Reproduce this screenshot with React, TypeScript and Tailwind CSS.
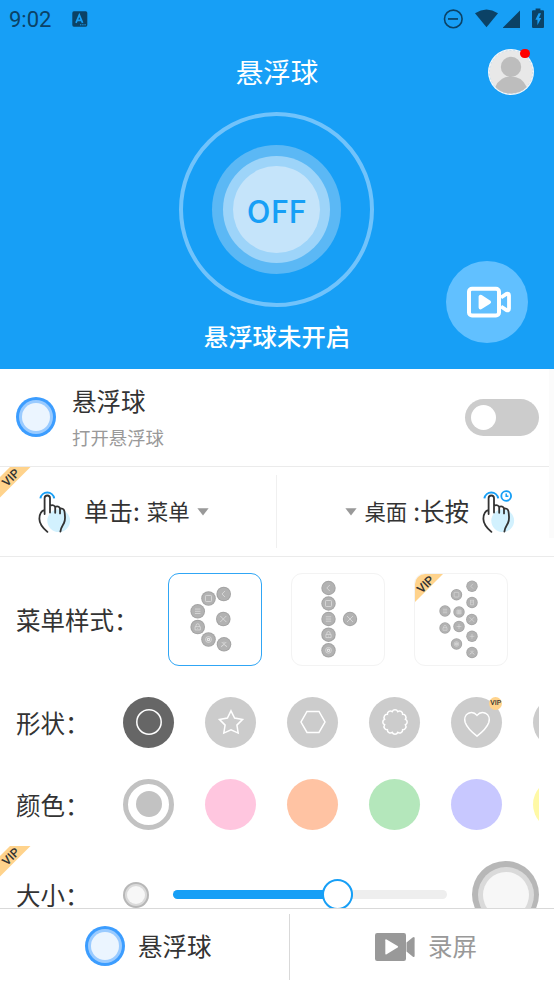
import type { ReactNode } from "react";

type Glyph = "back" | "square" | "menu" | "lock" | "target" | "fan" | "close" | "plus" | "trash" | "grid";
type Dot = [number, number, Glyph];

const arcDots: Dot[] = [
  [55.7, 21, "back"],
  [40.5, 25.5, "square"],
  [29.7, 38.3, "menu"],
  [29.7, 54, "lock"],
  [40.5, 66.5, "target"],
  [56, 71.3, "fan"],
  [55.3, 46, "close"],
];

const lineDots: Dot[] = [
  [37.5, 15, "back"],
  [37.5, 30.5, "square"],
  [37.5, 46, "menu"],
  [37.5, 61.7, "lock"],
  [37.5, 77.3, "target"],
  [59, 46, "close"],
];

const doubleDots: Dot[] = [
  [58, 13.2, "back"],
  [42.5, 21.7, "square"],
  [58, 29.5, "trash"],
  [31, 38, "menu"],
  [45, 39, "grid"],
  [57.8, 46.5, "close"],
  [31, 55, "lock"],
  [45, 53.5, "plus"],
  [58, 63.3, "plus"],
  [42.5, 71, "target"],
  [58, 79.5, "fan"],
];

const glyphs: Record<Glyph, ReactNode> = {
  back: <path d="M1.3-3 L-1.7 0 L1.3 3" />,
  square: <rect x="-3" y="-3" width="6" height="6" rx="0.8" />,
  menu: <path d="M-2.7-2.2H2.7M-2.7 0H2.7M-2.7 2.2H2.7" />,
  lock: <path d="M-2.6-0.3H2.6V2.9H-2.6ZM-1.6-0.3V-1.6A1.6 1.6 0 0 1 1.6-1.6V-0.3M0 1V1.8" />,
  target: (
    <>
      <circle r="2.9" />
      <circle r="1.2" strokeWidth="1.2" />
    </>
  ),
  fan: <path d="M-2.3-2.3L2.2 2.2M2.3-2.3L-2.2 2.2M-3 2.4L-1.3 1M3 2.4L1.3 1M0-1V-2.6" />,
  close: <path d="M-3-3L3 3M3-3L-3 3" />,
  plus: <path d="M-3 0H3M0-3V3" />,
  trash: <path d="M-2.4-2.8H2.4M-1.8-2.8V2.9H1.8V-2.8M-1.8-0.6H1.8" />,
  grid: <path d="M-2.6-2.4H2.6V2.4H-2.6ZM-0.8-2.4V2.4M1-2.4V2.4M-2.6 0H2.6" />,
};

const colors = ["bg-[#ffc6df]", "bg-[#ffc3a3]", "bg-[#b4e7bb]", "bg-[#c8c8ff]", "bg-[#fff9a6]"];

// scalloped outline for the flower shape
function flowerPath() {
  const n = 12;
  let d = "";
  for (let i = 0; i <= n; i++) {
    const a = (i / n) * Math.PI * 2 - Math.PI / 2 + Math.PI / n;
    const x = (13 + Math.cos(a) * 10.8).toFixed(2);
    const y = (13 + Math.sin(a) * 10.8).toFixed(2);
    d += i === 0 ? `M${x} ${y}` : `A3.1 3.1 0 0 1 ${x} ${y}`;
  }
  return d + "Z";
}

const shapes: ReactNode[] = [
  <circle key="circle" cx="13" cy="13" r="12.2" />,
  <path key="star" d="M13 1.8L16.6 9.1L24.6 10.4L18.9 16.1L20.2 24.1L13 20.8L5.8 24.1L7.1 16.1L1.4 10.4L9.4 9.1Z" />,
  <path key="hexagon" d="M7 2.4H19L25 13L19 23.4H7L1 13Z" />,
  <path key="flower" d={flowerPath()} />,
  <path
    key="heart"
    d="M13 6.4C10.4 3.2 7.2 3 4.6 4.2C1 6 0 10 1.2 13.6C2.8 18 8 23.4 13 27.2C18 23.4 23.2 18 24.8 13.6C26 10 25 6 21.4 4.2C18.8 3 15.6 3.2 13 6.4Z"
  />,
  null,
];

function MenuDots({ dots, r }: { dots: Dot[]; r: number }) {
  return (
    <svg width="94" height="93" viewBox="0 0 94 93" className="block">
      {dots.map(([x, y, g], i) => (
        <g key={i} transform={`translate(${x} ${y}) scale(${r / 7.2})`}>
          <circle r="7.2" fill="#a4a4a4" />
          <circle r="6.2" fill="#b2b2b2" />
          <g fill="none" stroke="#e6e6e6" strokeWidth="0.65">
            {glyphs[g]}
          </g>
        </g>
      ))}
    </svg>
  );
}

function VipText({ x, y }: { x: number; y: number }) {
  return (
    <text
      transform={`translate(${x} ${y}) rotate(-45)`}
      textAnchor="middle"
      y="4.2"
      fontSize="12"
      fontWeight="500"
      fontFamily="Roboto, sans-serif"
      fill="#333"
    >
      VIP
    </text>
  );
}

function VipRibbon() {
  return (
    <svg width="31" height="31" viewBox="0 0 31 31" className="absolute left-0 top-0">
      <path d="M10 0H30.5L0 30.5V10Z" fill="#ffd38c" />
      <VipText x={10.8} y={10.6} />
    </svg>
  );
}

function BallIcon() {
  return (
    <span className="-mt-px flex size-10 shrink-0 items-center justify-center rounded-full bg-[#3c9dff]">
      <span className="flex size-[34px] items-center justify-center rounded-full bg-[#9acbff]">
        <span className="size-7 rounded-full bg-[#ebf5ff]" />
      </span>
    </span>
  );
}

function HandIcon({ long = false }: { long?: boolean }) {
  return (
    <svg width="34" height="44" viewBox="0 0 34 44" fill="none" strokeLinecap="round" className="shrink-0">
      <circle cx="20.7" cy="30.7" r="11.4" fill="#d2f1fe" />
      <path d="M2.4 8.4A7 7 0 0 1 16.2 8.4" stroke="#179ff6" strokeWidth="2" strokeLinecap="butt" />
      {long && (
        <g stroke="#179ff6" strokeWidth="1.5">
          <circle cx="24.2" cy="6" r="4.9" strokeWidth="1.8" />
          <path d="M24.2 3.4V6.2H26.4" strokeLinecap="butt" />
        </g>
      )}
      <path
        d="M6.6 24V8.2A2.7 2.7 0 0 1 12 8.2V22.6M12 15.6C15 14.6 17.2 15.5 17.2 17.8V22.8M17.2 16.8C20 15.8 22 17 22 19.4V23.4M22 18.4C25.6 18 26.6 20 26.8 24C27 28 27.6 29.6 26 33C24.6 36 22.8 37.2 22.4 41.6M6.6 19.8C3 21 1.4 24.8 1.4 28.6C1.2 33.6 4.4 37.6 9.4 41.9"
        stroke="#333"
        strokeWidth="1.8"
      />
    </svg>
  );
}

function Caret() {
  return (
    <svg width="12" height="8" viewBox="0 0 12 8" className="shrink-0">
      <path d="M0.4 0.3H11.6L6 7.6Z" fill="#999" />
    </svg>
  );
}

function StatusBar() {
  return (
    <div className="flex h-[38px] items-center pl-[9px] pr-[9px] text-[#0b4266]">
      <span className="w-[43px] pt-[2px] font-[Roboto,sans-serif] text-[22px] leading-none">9:02</span>
      <svg width="16" height="16" viewBox="0 0 16 16" className="ml-5">
        <rect x="0.3" y="0.3" width="15" height="15.4" rx="1.6" fill="currentColor" />
        <path d="M4 11.8L7.3 3.9L10.6 11.8M5.3 9.3H9.4" fill="none" stroke="#179ff6" strokeWidth="1.7" />
        <path d="M8 13.8H14" stroke="#179ff6" strokeWidth="1" strokeDasharray="1.4 0.8" />
      </svg>
      <svg width="102" height="22" viewBox="0 0 102 22" fill="currentColor" className="ml-auto">
        <circle cx="10.3" cy="10.9" r="8.8" fill="none" stroke="currentColor" strokeWidth="1.6" />
        <path d="M5 10.1H15V11.8H5Z" />
        <path d="M32 5.2Q43.5-2 55 5.2L43.5 19.3Z" />
        <path d="M60 20V19.6L77 2.4V20Z" />
        <path
          fillRule="evenodd"
          d="M92.6 0.4H97.4V2.2H100Q101 2.2 101 3.2V18.8Q101 20 100 20H90.2Q89 20 89 18.8V3.2Q89 2.2 90.2 2.2H92.6ZM95.6 5.2L92.4 11.8H94.4V17.2L98.2 10H96L98 5.2Z"
        />
      </svg>
    </div>
  );
}

function Header() {
  return (
    <header className="relative h-[369px] shrink-0 bg-[#179ff6] text-white">
      <StatusBar />
      <div className="grid h-[68px] grid-cols-[1fr_auto_1fr] items-center">
        <h1 className="col-start-2 text-[27.5px] leading-none">悬浮球</h1>
        <div className="relative mr-5 size-[46px] justify-self-end">
          <svg width="46" height="46" viewBox="0 0 46 46">
            <circle cx="23" cy="23" r="23" fill="#f5f8fa" />
            <circle cx="23" cy="23" r="21.7" fill="#e8e8e8" stroke="#9fcdec" strokeWidth="0.5" strokeDasharray="2 2" />
            <circle cx="23" cy="17.9" r="10.2" fill="#bdbdbd" />
            <path d="M7.3 38Q12 27.6 23 27.6T38.7 38Q32.5 44.5 23 44.5T7.3 38Z" fill="#bdbdbd" />
          </svg>
          <span className="absolute right-[4.5px] top-0 size-[9.4px] rounded-full bg-[#f00]" />
        </div>
      </div>
      <div className="mt-[6px] flex flex-col items-center">
        <div className="mr-px flex size-[195px] items-center justify-center rounded-full border-4 border-[#71c3fb]">
          <div className="flex size-[129px] items-center justify-center rounded-full bg-[#5bb8f5]">
            <div className="flex size-[107px] items-center justify-center rounded-full bg-[#9dd4f9]">
              <div className="flex size-[87px] items-center justify-center rounded-full bg-[#c5e4fa] text-[31.5px] font-medium leading-none text-[#179ff6]">
                OFF
              </div>
            </div>
          </div>
        </div>
        <p className="mt-4 text-[24.4px] font-medium leading-[25px]">悬浮球未开启</p>
      </div>
      <button className="absolute bottom-[26px] right-[26px] flex size-[82px] items-center justify-center rounded-full bg-[#61c0ff]">
        <svg width="46" height="32" viewBox="0 0 46 32" fill="none" stroke="#fff" strokeWidth="4" strokeLinejoin="round" className="ml-1">
          <rect x="3" y="2.8" width="30" height="26.6" rx="3" />
          <path d="M35 11.5L40.5 7.8Q43 7 43 9.5V22.5Q43 25 40.5 24.2L35 20.5" strokeWidth="3.8" />
          <path d="M14.6 10.8V21.4L23 16.1Z" fill="#fff" />
        </svg>
      </button>
    </header>
  );
}

function Label({ children }: { children: ReactNode }) {
  return <div className="shrink-0 whitespace-nowrap pl-4 pt-[2px] text-[24.5px] leading-none">{children}</div>;
}

function BigBall() {
  return (
    <span className="flex size-[67px] shrink-0 items-center justify-center rounded-full bg-[#b7b7b7]">
      <span className="flex size-14 items-center justify-center rounded-full bg-[#dadada]">
        <span className="size-[46px] rounded-full bg-[#f7f7f7]" />
      </span>
    </span>
  );
}

function Settings() {
  return (
    <main className="relative h-[539px] shrink-0 overflow-hidden">
      <section className="flex h-[98px] items-center border-b border-[#ebebeb] px-4">
        <BallIcon />
        <div className="-mt-px ml-4">
          <h2 className="text-[24.5px] leading-[28px]">悬浮球</h2>
          <p className="mt-[11px] text-[18.4px] leading-[22px] text-[#999]">打开悬浮球</p>
        </div>
        <button className="ml-auto mr-[-1px] flex h-[37px] w-[74px] items-center rounded-full bg-[#ccc] pl-[6px]">
          <span className="size-[25px] rounded-full bg-white" />
        </button>
      </section>

      <section className="relative flex h-[90px] items-center border-b border-[#ebebeb]">
        <VipRibbon />
        <div className="flex w-[276px] items-center pl-[38px]">
          <HandIcon />
          <span className="ml-3 text-[24.5px] leading-none">单击:</span>
          <span className="-mt-[2px] ml-[7px] mr-[7px] text-[21.4px] leading-none">菜单</span>
          <Caret />
        </div>
        <div className="h-[73px] w-px bg-[#f0f0f0]" />
        <div className="flex flex-1 items-center justify-end pr-[38px]">
          <Caret />
          <span className="-mt-[2px] ml-[7px] text-[21.4px] leading-none">桌面</span>
          <span className="ml-[6px] mr-[13px] text-[24.5px] leading-none">:长按</span>
          <HandIcon long />
        </div>
      </section>

      <section className="flex h-[125px] items-center">
        <div className="w-[168px] shrink-0">
          <Label>菜单样式：</Label>
        </div>
        <div className="flex gap-[29px]">
          <div className="h-[93px] w-[94px] shrink-0 overflow-hidden rounded-[11px] outline outline-[1.3px] -outline-offset-1 outline-[#30a6f5]">
            <MenuDots dots={arcDots} r={7.3} />
          </div>
          <div className="h-[93px] w-[94px] shrink-0 rounded-[11px] outline-1 -outline-offset-1 outline-[#f3f3f3]">
            <MenuDots dots={lineDots} r={7.2} />
          </div>
          <div className="relative h-[93px] w-[94px] shrink-0 overflow-hidden rounded-[11px] border border-[#f3f3f3]">
            <div className="-m-px">
              <MenuDots dots={doubleDots} r={5.7} />
            </div>
            <svg width="29" height="29" viewBox="0 0 29 29" className="absolute left-0 top-0">
              <path d="M0 0H28L0 28Z" fill="#ffd38c" />
              <VipText x={10.4} y={10.4} />
            </svg>
          </div>
        </div>
      </section>

      <section className="flex h-[81px] items-center">
        <div className="w-[123px] shrink-0">
          <Label>形状：</Label>
        </div>
        <div className="mr-[15px] flex gap-[30.6px] overflow-hidden">
          {shapes.map((shape, i) => (
            <div
              key={i}
              className={`relative flex size-[51.4px] shrink-0 items-center justify-center rounded-full ${
                i === 0 ? "bg-[#666]" : "bg-[#ccc]"
              }`}
            >
              <svg width="26" height="26" viewBox="0 0 26 26" fill="none" stroke="#fff" strokeWidth="1.5" className="overflow-visible">
                {shape}
              </svg>
              {i === 4 && (
                <span className="absolute right-0 top-0 flex size-[13px] items-center justify-center rounded-full bg-[#ffd38c] font-[Roboto,sans-serif] text-[7px] font-medium leading-none">
                  VIP
                </span>
              )}
            </div>
          ))}
        </div>
      </section>

      <section className="flex h-[83px] items-center">
        <div className="w-[123px] shrink-0">
          <Label>颜色：</Label>
        </div>
        <div className="mr-[15px] flex gap-[30.6px] overflow-hidden">
          <div className="flex size-[51.4px] shrink-0 items-center justify-center rounded-full border-[5px] border-[#c2c2c2]">
            <span className="size-[26px] rounded-full bg-[#c2c2c2]" />
          </div>
          {colors.map((color) => (
            <div key={color} className={`size-[51.4px] shrink-0 rounded-full ${color}`} />
          ))}
        </div>
      </section>

      <section className="relative flex h-[97px] items-center">
        <VipRibbon />
        <div className="w-[123px] shrink-0">
          <Label>大小：</Label>
        </div>
        <span className="flex size-[26px] items-center justify-center rounded-full bg-[#b7b7b7]">
          <span className="flex size-[22px] items-center justify-center rounded-full bg-[#dadada]">
            <span className="size-[18px] rounded-full bg-[#f7f7f7]" />
          </span>
        </span>
        <div className="ml-6 mr-[25px] flex h-[9px] flex-1 items-center rounded-full bg-[#eee]">
          <div className="flex h-[9px] w-[180px] items-center justify-end rounded-full bg-[#179ff6]">
            <span className="size-[31px] shrink-0 rounded-full border-[2.5px] border-[#179ff6] bg-white" />
          </div>
        </div>
        <div className="mr-[15px]">
          <BigBall />
        </div>
      </section>

      {/* scrollbar thumb */}
      <div className="absolute right-0 top-0 h-[169px] w-[5px] bg-[#fbfbfb]" />
    </main>
  );
}

function BottomNav() {
  return (
    <nav className="flex h-[76px] shrink-0 items-center border-t border-[#d9d9d9] text-[24.5px] leading-none">
      <button className="flex w-[289px] items-center gap-[13px] pl-[85px]">
        <BallIcon />
        <span>悬浮球</span>
      </button>
      <div className="h-[66px] w-px bg-[#d9d9d9]" />
      <button className="flex flex-1 items-center gap-[13px] pl-[85px] text-[#999]">
        <svg width="40" height="28" viewBox="0 0 40 28" fill="currentColor">
          <rect width="31" height="28" rx="2.2" />
          <path d="M31.5 9.5L37.6 4.6Q39.6 3.2 39.6 5.2V22.8Q39.6 24.8 37.6 23.4L31.5 18.5Z" />
          <path d="M10.3 7.2Q10.3 5.9 11.6 6.6L22.6 13.1Q23.6 13.8 22.6 14.5L11.6 21.2Q10.3 21.9 10.3 20.6Z" fill="#fff" />
        </svg>
        <span>录屏</span>
      </button>
    </nav>
  );
}

export default function App() {
  return (
    <div className="flex h-[984px] w-[554px] flex-col overflow-hidden bg-white font-['Noto_Sans_CJK_SC',sans-serif] text-[#333]">
      <Header />
      <Settings />
      <BottomNav />
    </div>
  );
}
